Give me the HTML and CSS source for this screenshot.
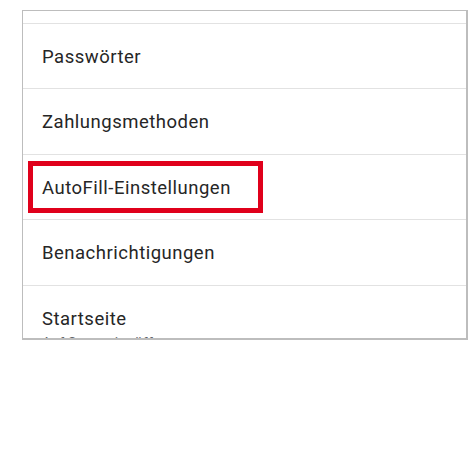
FILE: index.html
```html
<!DOCTYPE html>
<html lang="de">
<head>
  <meta charset="UTF-8">
  <meta name="viewport" content="width=device-width, initial-scale=1">
  <title>Einstellungen</title>
  <link rel="stylesheet" href="styles.css">
</head>
<body>

  <div class="frame">
    <div class="top-strip"></div>
    <div class="row">Passwörter</div>
    <div class="row">Zahlungsmethoden</div>
    <div class="row highlighted">
      AutoFill-Einstellungen
      <span class="mark"></span>
    </div>
    <div class="row">Benachrichtigungen</div>
    <div class="row last">
      Startseite
      <div class="sub">Auf Startseite öffnen</div>
    </div>
  </div>

</body>
</html>
```

FILE: styles.css
```css
body {
  margin: 0;
  padding: 10px 0 0 22px;
  background: #fff;
  font-family: Roboto, "Liberation Sans", sans-serif;
}
.frame {
  width: 443px;
  height: 327px;
  border: 1px solid #bdbdbd;
  border-right-width: 2px;
  border-bottom-width: 2px;
  overflow: hidden;
}
.top-strip {
  height: 12px;
}
.row {
  position: relative;
  height: 65px;
  box-sizing: border-box;
  border-top: 1px solid #e2e2e2;
  padding: 21px 0 0 19px;
  font-size: 18.5px;
  letter-spacing: 0.5px;
  line-height: 24px;
  color: #262626;
}
.row:nth-child(3),
.row:nth-child(5) {
  height: 66px;
}
.sub {
  padding-top: 2px;
  font-size: 14px;
  line-height: 20px;
  letter-spacing: 0.25px;
  color: #5f6368;
}
.mark {
  position: absolute;
  left: 5px;
  top: 6px;
  width: 225px;
  height: 42px;
  border: 5px solid #e0001b;
}
```
